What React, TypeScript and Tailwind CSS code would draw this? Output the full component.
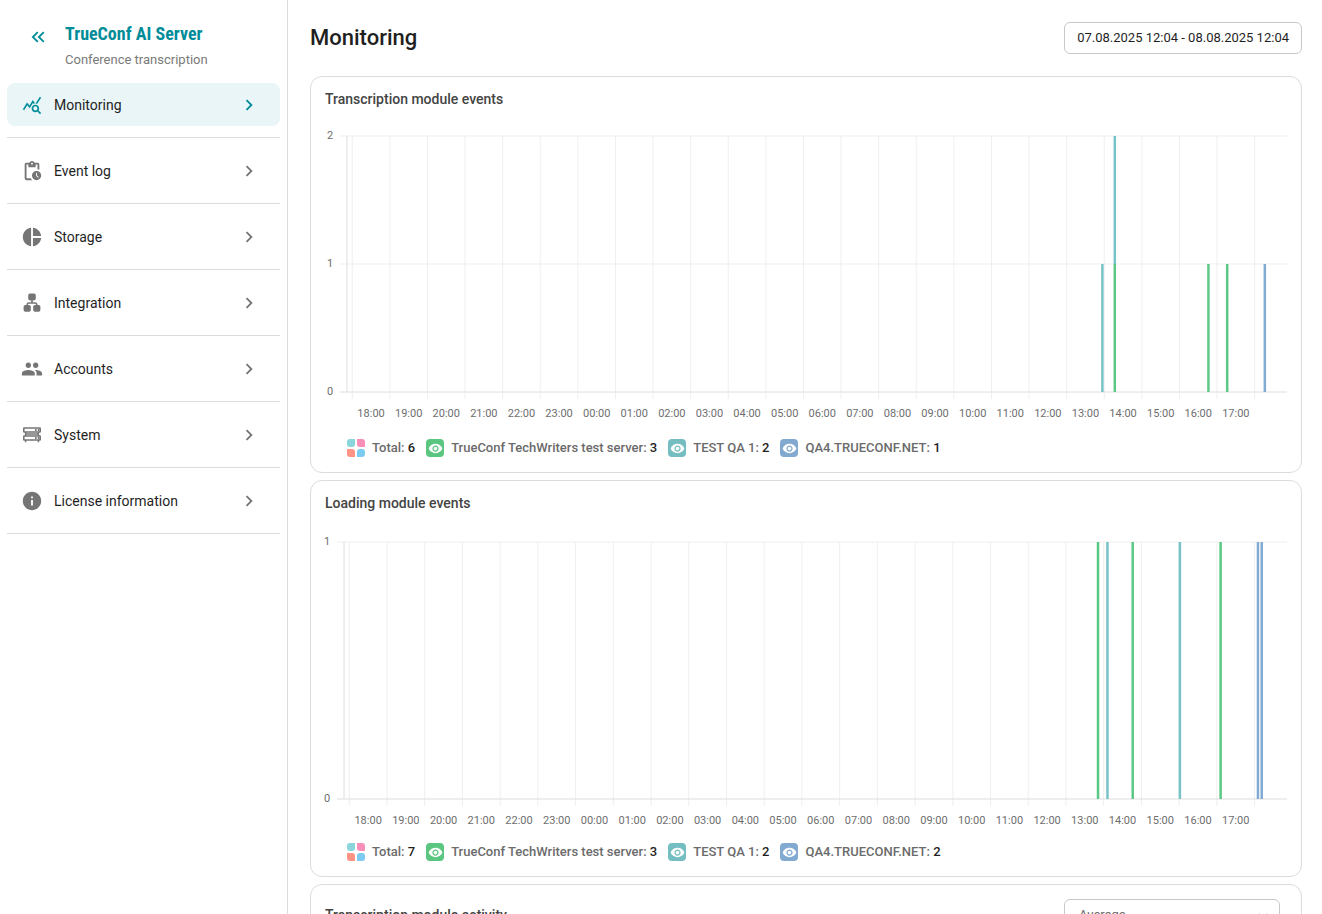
import { useState } from 'react';
import {
    MdChevronRight, MdInfo, MdKeyboardDoubleArrowLeft, MdPendingActions,
    MdPeople, MdPieChart, MdQueryStats, MdVisibility
} from 'react-icons/md';

type TabType = 'monitoring' | 'log' | 'storage' | 'integration' | 'accounts' | 'system' | 'license';

interface LinkItem {
    id: TabType;
    name: string;
}

interface Bar {
    at: number; // hours after the first grid line
    from: number;
    to: number;
    color: string;
}

interface Server {
    name: string;
    count: number;
    badge: string;
}

interface ChartCardProps {
    title: string;
    max: number;
    top: number;
    bottom: number;
    indent: string;
    bars: Bar[];
    total: number;
    servers: Server[];
}

const GREEN = '#5bc985';
const TEAL = '#78c3c7';
const BLUE = '#82abd3';

const links: LinkItem[] = [
    { id: 'monitoring', name: 'Monitoring' },
    { id: 'log', name: 'Event log' },
    { id: 'storage', name: 'Storage' },
    { id: 'integration', name: 'Integration' },
    { id: 'accounts', name: 'Accounts' },
    { id: 'system', name: 'System' },
    { id: 'license', name: 'License information' },
];

const transcriptionBars: Bar[] = [
    { at: 19.95, from: 0, to: 1, color: TEAL },
    { at: 20.28, from: 0, to: 1, color: GREEN },
    { at: 20.28, from: 1, to: 2, color: TEAL },
    { at: 22.77, from: 0, to: 1, color: GREEN },
    { at: 23.27, from: 0, to: 1, color: GREEN },
    { at: 24.27, from: 0, to: 1, color: BLUE },
];

const loadingBars: Bar[] = [
    { at: 19.85, from: 0, to: 1, color: GREEN },
    { at: 20.1, from: 0, to: 1, color: TEAL },
    { at: 20.77, from: 0, to: 1, color: GREEN },
    { at: 22.02, from: 0, to: 1, color: TEAL },
    { at: 23.1, from: 0, to: 1, color: GREEN },
    { at: 24.09, from: 0, to: 1, color: BLUE },
    { at: 24.19, from: 0, to: 1, color: BLUE },
];

const SPAN = 25;
const toX = (hour: number) => `${((hour + 0.14) / SPAN) * 100}%`;
const hourLabel = (i: number) => `${String((18 + i) % 24).padStart(2, '0')}:00`;

function SitemapIcon() {
    return (
        <svg width="20" height="20" viewBox="0 0 20 20" fill="currentColor">
            <rect x="6.2" y="0.6" width="7.6" height="6.8" rx="1.8" />
            <rect x="1.6" y="12" width="7.2" height="6.8" rx="1.8" />
            <rect x="11.2" y="12" width="7.2" height="6.8" rx="1.8" />
            <path d="M10 7v3M5.2 13v-1.5A1.5 1.5 0 0 1 6.7 10h6.6a1.5 1.5 0 0 1 1.5 1.5V13" fill="none" stroke="currentColor" strokeWidth="1.5" />
        </svg>
    );
}

function RackIcon() {
    return (
        <svg width="20" height="20" viewBox="0 0 20 20" fill="none" stroke="currentColor" strokeWidth="1.6">
            <rect x="1.8" y="3" width="16.4" height="4" rx="0.5" />
            <rect x="1.8" y="11" width="16.4" height="4" rx="0.5" />
            <path d="M3.6 7v4M16.4 7v4M4 9h12M3.6 15v2.2M16.4 15v2.2" strokeWidth="1.4" />
            <path d="M13 5h1.6M15.8 5h1.4M13 13h1.6M15.8 13h1.4" strokeWidth="2.2" />
        </svg>
    );
}

function getIcon(id: TabType) {
    switch (id) {
        case 'monitoring': return <MdQueryStats size={20} />;
        case 'log': return <MdPendingActions size={22} />;
        case 'storage': return <MdPieChart size={22} />;
        case 'integration': return <SitemapIcon />;
        case 'accounts': return <MdPeople size={22} />;
        case 'system': return <RackIcon />;
        default: return <MdInfo size={22} />;
    }
}

function SideBar() {
    const [active, setActive] = useState<TabType>('monitoring');

    return (
        <aside className="w-72 shrink-0 border-r border-[#dcdcdc] px-[7px]">
            <div className="flex items-start pt-5 pl-5">
                <button aria-label="Collapse menu" className="mt-1.5 mr-4 text-[#008c99]">
                    <MdKeyboardDoubleArrowLeft size={22} />
                </button>
                <div>
                    <p className="font-['Roboto_Condensed',Roboto,sans-serif] text-[18px] leading-7 font-bold whitespace-nowrap text-[#008c99]">
                        TrueConf AI Server
                    </p>
                    <p className="pt-1 text-[13px] leading-4 text-[#7a7a7a]">Conference transcription</p>
                </div>
            </div>
            <nav className="mt-1">
                {links.map((link) => {
                    const isActive = link.id === active;
                    return (
                        <div key={link.id} className="border-b border-[#dcdcdc] py-[11px]">
                            <button
                                onClick={() => setActive(link.id)}
                                className={`flex h-[43px] w-full items-center rounded-lg pr-5 pl-3.5 text-left ${isActive ? 'bg-[#e9f5f6]' : ''}`}
                            >
                                <span className={`flex w-[22px] justify-center ${isActive ? 'text-[#008c99]' : 'text-[#757575]'}`}>
                                    {getIcon(link.id)}
                                </span>
                                <span className="ml-[11px] flex-1 text-[14px] leading-5 text-[#1f1f1f]">{link.name}</span>
                                <MdChevronRight size={22} className={isActive ? 'text-[#008c99]' : 'text-[#757575]'} />
                            </button>
                        </div>
                    );
                })}
            </nav>
        </aside>
    );
}

function Legend({ total, servers }: { total: number; servers: Server[] }) {
    return (
        <div className="mt-[17px] ml-[22px] flex flex-wrap gap-x-[11px] text-[13px] leading-5 font-medium text-[#6b6b6b]">
            <div className="flex items-center">
                <svg width="18" height="18" viewBox="0 0 18 18" className="mr-[7px]">
                    <path d="M3 0h5v5a3 3 0 0 1-3 3H3a3 3 0 0 1-3-3V3a3 3 0 0 1 3-3z" fill="#8ad6dc" />
                    <path d="M10 0h5a3 3 0 0 1 3 3v5h-5a3 3 0 0 1-3-3z" fill="#f98fb9" />
                    <path d="M0 10h5a3 3 0 0 1 3 3v5H3a3 3 0 0 1-3-3z" fill="#ff9385" />
                    <path d="M13 10h2a3 3 0 0 1 3 3v2a3 3 0 0 1-3 3h-5v-5a3 3 0 0 1 3-3z" fill="#7dcbf0" />
                </svg>
                <span>Total: <span className="text-[#1f1f1f]">{total}</span></span>
            </div>
            {servers.map((server) => (
                <button key={server.name} className="flex items-center">
                    <span className={`mr-[7px] flex size-[18px] items-center justify-center rounded-sm text-white ${server.badge}`}>
                        <MdVisibility size={15} />
                    </span>
                    <span>{server.name}: <span className="text-[#1f1f1f]">{server.count}</span></span>
                </button>
            ))}
        </div>
    );
}

function ChartCard({ title, max, top, bottom, indent, bars, total, servers }: ChartCardProps) {
    const toY = (value: number) => bottom - ((bottom - top) * value) / max;
    const levels = Array.from({ length: max + 1 }, (_, i) => i);
    const hours = Array.from({ length: 25 }, (_, i) => i);

    return (
        <section className="rounded-xl border border-[#dcdcdc] px-3.5 pt-2.5 pb-3.5">
            <h2 className="text-[14px] leading-6 font-medium text-[#444444]">{title}</h2>
            <div className={indent}>
                <svg className="block h-[310px] w-full overflow-visible font-[Roboto,sans-serif] text-[11px]" role="img" aria-label={title}>
                    {hours.map((i) => (
                        <line key={i} x1={toX(i)} x2={toX(i)} y1={top} y2={bottom + 7} stroke="#efefef" />
                    ))}
                    {levels.map((level) => (
                        <g key={level}>
                            <line x1="-7" x2="100%" y1={toY(level)} y2={toY(level)} stroke={level === 0 ? '#dedede' : '#efefef'} />
                            <text x="-17" y={toY(level) + 3} textAnchor="middle" fill="#6e6e6e">{level}</text>
                        </g>
                    ))}
                    <line x1="0" x2="0" y1={top} y2={bottom} stroke="#dedede" />
                    {bars.map((bar, i) => (
                        <line key={i} x1={toX(bar.at)} x2={toX(bar.at)} y1={toY(bar.to)} y2={toY(bar.from)} stroke={bar.color} strokeWidth="2.5" />
                    ))}
                    {hours.slice(0, 24).map((i) => (
                        <text key={i} x={toX(i + 0.5)} y={bottom + 25} textAnchor="middle" fill="#6e6e6e">{hourLabel(i)}</text>
                    ))}
                </svg>
            </div>
            <Legend total={total} servers={servers} />
        </section>
    );
}

export default function App() {
    return (
        <div className="flex h-screen overflow-hidden bg-white font-[Roboto,sans-serif]">
            <SideBar />
            <main className="min-w-0 flex-1 pt-[22px] pr-5 pl-[22px]">
                <header className="mb-[22px] flex items-center justify-between">
                    <h1 className="text-[22px] leading-8 font-medium text-[#1f1f1f]">Monitoring</h1>
                    <button className="h-8 rounded-md border border-[#c8c8c8] px-3 text-[13px] text-[#1f1f1f]">
                        07.08.2025 12:04 - 08.08.2025 12:04
                    </button>
                </header>
                <div className="flex flex-col gap-[7px]">
                    <ChartCard
                        title="Transcription module events"
                        max={2}
                        top={25}
                        bottom={281}
                        indent="pl-[22px]"
                        bars={transcriptionBars}
                        total={6}
                        servers={[
                            { name: 'TrueConf TechWriters test server', count: 3, badge: 'bg-[#5bc680]' },
                            { name: 'TEST QA 1', count: 2, badge: 'bg-[#74bec2]' },
                            { name: 'QA4.TRUECONF.NET', count: 1, badge: 'bg-[#82aad0]' },
                        ]}
                    />
                    <ChartCard
                        title="Loading module events"
                        max={1}
                        top={27}
                        bottom={284}
                        indent="pl-[19px]"
                        bars={loadingBars}
                        total={7}
                        servers={[
                            { name: 'TrueConf TechWriters test server', count: 3, badge: 'bg-[#5bc680]' },
                            { name: 'TEST QA 1', count: 2, badge: 'bg-[#74bec2]' },
                            { name: 'QA4.TRUECONF.NET', count: 2, badge: 'bg-[#82aad0]' },
                        ]}
                    />
                    <section className="rounded-xl border border-[#dcdcdc] px-3.5 pt-3.5 pb-[15px]">
                        <div className="flex items-center justify-between pr-[7px]">
                            <h2 className="text-[14px] leading-6 font-medium text-[#444444]">Transcription module activity</h2>
                            <div className="relative">
                                <select aria-label="Value" className="h-8 w-[216px] appearance-none rounded-md border border-[#c8c8c8] px-3.5 text-[13px] text-[#6b6b6b]">
                                    <option>Average</option>
                                    <option>Maximum</option>
                                </select>
                                <MdChevronRight size={18} className="pointer-events-none absolute top-2 right-2 rotate-90 text-[#757575]" />
                            </div>
                        </div>
                    </section>
                </div>
            </main>
        </div>
    );
}
